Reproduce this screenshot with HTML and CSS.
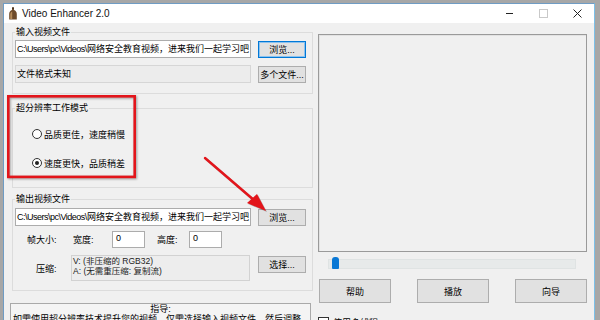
FILE: index.html
```html
<!DOCTYPE html>
<html lang="zh-CN">
<head>
    <meta charset="UTF-8">
    <meta name="viewport" content="width=device-width, initial-scale=1.0">
    <title>Video Enhancer 2.0</title>
    <link rel="stylesheet" href="styles.css">
</head>
<body>
    <div class="window">
        <!-- Title bar -->
        <div class="titlebar">
            <svg class="app-icon" width="8" height="13" viewBox="0 0 8 13">
                <path d="M3 0.5h2v2.5c1.6 0.6 2.8 2 2.8 4v5.5H0.2V7c0-2 1.2-3.4 2.8-4z" fill="#6e4b2a"/>
                <path d="M1.2 7.5c0-1.5 0.9-2.6 2-3v7.5h-2z" fill="#b48a58"/>
                <rect x="3" y="0.5" width="2" height="1.2" fill="#3d2a18"/>
            </svg>
            <span class="title">Video Enhancer 2.0</span>
            <div class="caption-btns">
                <span class="cap"><span class="cap-min"></span></span>
                <span class="cap"><span class="cap-max"></span></span>
                <span class="cap">
                    <svg width="9" height="9" viewBox="0 0 9 9"><path d="M0.5 0.5l8 8M8.5 0.5l-8 8" stroke="#222" stroke-width="1"/></svg>
                </span>
            </div>
        </div>

        <div class="client">
            <div class="left">
                <fieldset class="group g-input">
                    <legend>输入视频文件</legend>
                    <div class="row">
                        <div class="field"><span class="path">C:\Users\pc\Videos\</span>网络安全教育视频，进来我们一起学习吧</div>
                        <button class="btn focused">浏览...</button>
                    </div>
                    <div class="row row-gap">
                        <div class="field readonly">文件格式未知</div>
                        <button class="btn">多个文件...</button>
                    </div>
                </fieldset>

                <fieldset class="group g-mode">
                    <legend>超分辨率工作模式</legend>
                    <div class="radio"><span class="dot"></span>品质更佳，速度稍慢</div>
                    <div class="radio checked"><span class="dot"></span>速度更快，品质稍差</div>
                </fieldset>

                <fieldset class="group g-output">
                    <legend>输出视频文件</legend>
                    <div class="row">
                        <div class="field"><span class="path">C:\Users\pc\Videos\</span>网络安全教育视频，进来我们一起学习吧</div>
                        <button class="btn">浏览...</button>
                    </div>
                    <div class="frame-row">
                        <span class="lbl-frame">帧大小:</span>
                        <span class="lbl-w">宽度:</span>
                        <div class="num">0</div>
                        <span class="lbl-h">高度:</span>
                        <div class="num">0</div>
                    </div>
                    <div class="codec-row">
                        <span class="lbl-codec">压缩:</span>
                        <div class="codec-box">
                            <div>V: (非压缩的 RGB32)</div>
                            <div>A: (无需重压缩: 复制流)</div>
                        </div>
                        <button class="btn">选择...</button>
                    </div>
                </fieldset>

                <div class="guide">
                    <div class="guide-title">指导:</div>
                    <p>如需使用超分辨率技术提升您的视频，仅需选择输入视频文件，然后调整输出设置。</p>
                </div>
            </div>

            <div class="right">
                <div class="preview"></div>
                <div class="slider">
                    <div class="track"><span class="thumb"></span></div>
                </div>
                <div class="actions">
                    <button class="btn big">帮助</button>
                    <button class="btn big">播放</button>
                    <button class="btn big">向导</button>
                </div>
                <div class="check"><span class="box"></span>使用多线程</div>
            </div>
        </div>
    </div>

    <!-- Red annotations drawn over the screenshot -->
    <svg class="annot" width="600" height="320" viewBox="0 0 600 320">
        <rect x="8.3" y="96.3" width="126.4" height="80.6" fill="none" stroke="#e3151b" stroke-width="2.6"/>
        <line x1="205" y1="158" x2="255" y2="201" stroke="#e3151b" stroke-width="2.4" stroke-linecap="round"/>
        <polygon points="266,211 247,203 257,194" fill="#e3151b"/>
    </svg>
</body>
</html>
```

FILE: styles.css
```css
body {
    margin: 0;
    height: 320px;
    overflow: hidden;
    position: relative;
    background: #a7a7a7;
    font-family: "Liberation Sans", "Noto Sans CJK SC", sans-serif;
    font-size: 9px;
    color: #000;
}

.window {
    margin: 3px 0 0 3px;
    width: 590px;
    height: 340px;
    border: 1px solid #6f9cc4;
    border-right-color: #7cc0e8;
    background: #f0f0f0;
}

/* Title bar */
.titlebar {
    height: 19px;
    background: #fff;
    display: flex;
    align-items: center;
}
.app-icon {
    margin-left: 5px;
    display: block;
}
.title {
    margin-left: 5px;
    font-size: 10px;
    color: #111;
}
.caption-btns {
    margin-left: auto;
    display: flex;
    height: 19px;
}
.cap {
    width: 34px;
    display: flex;
    align-items: center;
    justify-content: center;
}
.cap-min {
    width: 7px;
    height: 1px;
    background: #222;
}
.cap-max {
    width: 7px;
    height: 7px;
    border: 1px solid #c9c9c9;
}

/* Client area */
.client {
    display: flex;
    gap: 5px;
    padding: 4px 7px 0 8px;
}
.left {
    width: 301px;
    display: flex;
    flex-direction: column;
}
.right {
    width: 269px;
    margin-top: 7px;
    display: flex;
    flex-direction: column;
}

.group {
    margin: 0;
    padding: 0 6px 0 2px;
    border: 1px solid #dcdcdc;
    min-width: 0;
}
.group legend {
    padding: 0 1px;
    line-height: 11px;
    font-size: 9px;
}
.g-input { padding-top: 2px; padding-bottom: 10px; }
.g-mode { margin-top: 9px; padding-top: 14px; padding-bottom: 18px; }
.g-output { margin-top: 6px; padding-top: 3px; padding-bottom: 9px; }

.row {
    display: flex;
    align-items: center;
    justify-content: space-between;
}
.row-gap { margin-top: 7px; }

.field {
    width: 236px;
    height: 18px;
    box-sizing: border-box;
    border: 1px solid #acacac;
    background: #fff;
    padding-left: 1px;
    line-height: 16px;
    white-space: nowrap;
    overflow: hidden;
}
.field .path {
    letter-spacing: -0.5px;
}
.field.readonly {
    background: #ececec;
    border-color: #d6d6d6;
}

.btn {
    width: 48px;
    height: 17px;
    padding: 0;
    border: 1px solid #adadad;
    background: #e1e1e1;
    font-family: inherit;
    font-size: 9px;
    color: #000;
}
.btn.focused {
    border: 1px solid #0078d7;
    box-shadow: inset 0 0 0 1px #8cc2ee;
}

/* Radios */
.radio {
    display: flex;
    align-items: center;
    height: 12px;
    margin-left: 17px;
}
.radio + .radio { margin-top: 17px; }
.dot {
    width: 10px;
    height: 10px;
    box-sizing: border-box;
    border: 1px solid #333;
    border-radius: 50%;
    background: #fff;
    margin-right: 2px;
    display: flex;
    align-items: center;
    justify-content: center;
}
.radio.checked .dot::after {
    content: "";
    width: 4px;
    height: 4px;
    border-radius: 50%;
    background: #222;
}

/* Frame size */
.frame-row {
    display: flex;
    align-items: center;
    margin-top: 5px;
    height: 17px;
}
.lbl-frame { margin-left: 12px; width: 46px; }
.lbl-w { width: 39px; }
.lbl-h { margin-left: 12px; width: 32px; }
.num {
    width: 33px;
    height: 17px;
    box-sizing: border-box;
    border: 1px solid #acacac;
    background: #fff;
    padding: 1px 0 0 3px;
    line-height: 10px;
}

/* Compression */
.codec-row {
    display: flex;
    align-items: flex-start;
    margin-top: 7px;
}
.lbl-codec {
    margin: 7px 0 0 21px;
    width: 35px;
}
.codec-box {
    width: 179px;
    height: 26px;
    box-sizing: border-box;
    border: 1px solid #d2d2d2;
    background: #ededed;
    padding: 1px 0 0 1px;
    font-size: 8.5px;
    line-height: 9.5px;
    color: #222;
}
.codec-row .btn {
    margin: 1px 0 0 auto;
}

/* Guide */
.guide {
    margin: 12px 2px 0 -2px;
    border: 1px solid #a9a9a9;
    background: #f4f4f4;
    padding: 0 2px;
}
.guide-title {
    text-align: center;
    line-height: 10px;
}
.guide p {
    margin: 0;
    line-height: 11px;
}

/* Right side */
.preview {
    height: 218px;
    box-sizing: border-box;
    border: 1px solid #9a9a9a;
    box-shadow: inset 1px 1px 0 #e2e2e2;
    background: #f0f0f0;
}
.slider {
    margin: 5px 11px 0 10px;
    height: 13px;
    display: flex;
    align-items: center;
}
.track {
    position: relative;
    flex: 1;
    height: 8px;
    border: 1px solid #dfe3e3;
    background: #e7eaea;
}
.thumb {
    position: absolute;
    left: 3px;
    top: -3px;
    width: 7px;
    height: 12px;
    border-radius: 3px 3px 1px 1px;
    background: #0a78d5;
}
.actions {
    margin-top: 9px;
    padding-left: 1px;
    display: flex;
    justify-content: space-between;
}
.btn.big {
    width: 72px;
    height: 24px;
}
.check {
    margin-top: 13px;
    display: flex;
    align-items: center;
}
.box {
    width: 9px;
    height: 9px;
    border: 1px solid #333;
    background: #fff;
    margin-right: 4px;
}

/* Annotations */
.annot {
    position: absolute;
    left: 0;
    top: 0;
    pointer-events: none;
}
.annot rect {
    filter: drop-shadow(1px 1px 1px rgba(0, 0, 0, 0.35));
}
.annot line, .annot polygon {
    filter: drop-shadow(1px 1px 0.5px rgba(0, 0, 0, 0.25));
}
```
